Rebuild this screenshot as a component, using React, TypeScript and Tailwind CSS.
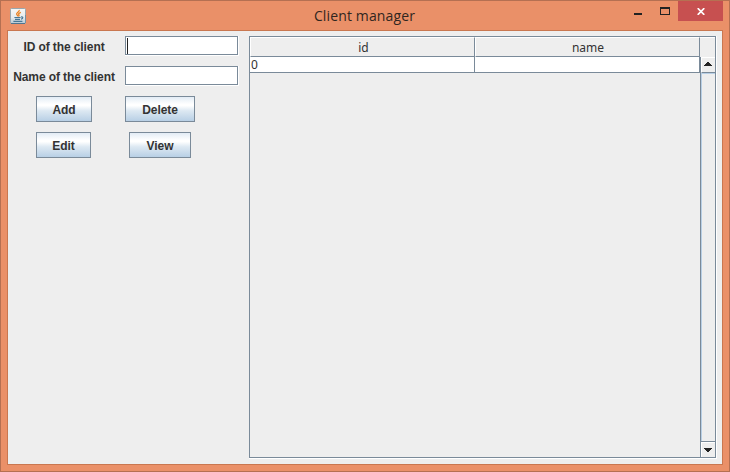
import React from "react";

function JavaIcon() {
  return (
    <svg width="16" height="16" viewBox="0 0 16 16" fill="none">
      <defs>
        <linearGradient id="tile" x1="0" y1="0" x2="0" y2="1">
          <stop offset="0" stopColor="#f7f7f5" />
          <stop offset="0.6" stopColor="#e6ebee" />
          <stop offset="1" stopColor="#b4c6d2" />
        </linearGradient>
      </defs>
      <rect x="0.5" y="0.5" width="15" height="15" rx="1" fill="url(#tile)" stroke="#98a7af" />
      <path d="M1 15.5H15" stroke="#4d7590" />
      <path d="M15.5 7V15" stroke="#7391a3" />
      <path d="M9.2 2C9.8 4 6 4.6 6.7 6.3C7 7.1 8 7.5 7.8 8.5M10.8 4.4C8.9 5.2 8.2 5.8 8.9 6.9C9.3 7.5 9 8 8.6 8.4" stroke="#ea7f1c" strokeWidth="1.3" />
      <path d="M4.4 9.5H10.6M5 11.4H10M11 9C13.6 8.5 13.2 10.8 11 11.2M3.4 13.3H12.4" stroke="#477795" strokeWidth="1.2" />
    </svg>
  );
}

function TextField({ caret = false }: { caret?: boolean }) {
  return (
    <div className="h-5 w-[114px] border-r border-b border-white">
      <div className="h-[19px] w-[113px] border border-[#7a8a99] bg-white pl-px pt-px">
        {caret && <div className="h-4 w-px bg-[#222]" />}
      </div>
    </div>
  );
}

function Button({ label, className }: { label: string; className: string }) {
  return (
    <button
      className={`flex h-[26px] items-center justify-center border border-[#7a8a99] bg-[linear-gradient(to_bottom,#e3ecf5_0%,#ffffff_30%,#ffffff_36%,#dce8f2_58%,#b8cfe5_100%)] pt-px text-[12px] leading-none font-bold tracking-[-0.05px] text-[#333] ${className}`}
    >
      {label}
    </button>
  );
}

function Arrow({ down = false }: { down?: boolean }) {
  return (
    <svg width="8" height="4" viewBox="0 0 8 4" shapeRendering="crispEdges" className={down ? "mr-[2px] rotate-180" : "mr-[2px] mb-[2px]"}>
      <path d="M3 0H5V1H6V2H7V3H8V4H0V3H1V2H2V1H3Z" fill="#222" />
    </svg>
  );
}

function TitleBar() {
  return (
    <header className="flex h-[29px] w-full">
      <div className="w-[213px] pt-[7px] pl-[9px]">
        <JavaIcon />
      </div>
      <h1 className="w-[301px] pt-[3px] text-center font-['Open_Sans','Noto_Sans',sans-serif] text-[14px] leading-6 tracking-[0.14px] text-[#302620]">
        Client manager
      </h1>
      <div className="flex flex-1 justify-end">
        <div className="mt-3 mr-[18px] h-[2px] w-2 bg-[#222]" />
        <div className="mt-[6px] mr-2 h-2 w-[10px] border border-t-2 border-[#222]" />
        <div className="mr-[6px] flex h-5 w-[45px] items-center justify-center bg-[#c75050]">
          <svg width="8" height="7" viewBox="0 0 8 7" className="mt-px">
            <path d="M0.7 0.2L7.3 6.8M7.3 0.2L0.7 6.8" stroke="white" strokeWidth="1.7" />
          </svg>
        </div>
      </div>
    </header>
  );
}

function ClientForm() {
  return (
    <section className="w-[241px] pt-[5px]">
      <div className="flex">
        <label className="w-[112px] pt-[5px] text-center text-[12px] leading-3 font-bold tracking-[-0.1px] whitespace-nowrap text-[#333]">
          ID of the client
        </label>
        <div className="ml-[5px]">
          <TextField caret />
        </div>
      </div>
      <div className="mt-[10px] flex">
        <label className="w-[112px] pt-[5px] text-center text-[12px] leading-3 font-bold tracking-[-0.1px] whitespace-nowrap text-[#333]">
          Name of the client
        </label>
        <div className="ml-[5px]">
          <TextField />
        </div>
      </div>
      <div className="mt-[10px] flex">
        <Button label="Add" className="ml-7 w-14" />
        <Button label="Delete" className="ml-[33px] w-[70px]" />
      </div>
      <div className="mt-[10px] flex">
        <Button label="Edit" className="ml-7 w-[55px]" />
        <Button label="View" className="ml-[38px] w-[62px]" />
      </div>
    </section>
  );
}

function ClientTable() {
  return (
    <section className="mt-[5px] h-[423px] w-[468px] border-r border-b border-white font-['Noto_Sans','Open_Sans',sans-serif] text-[12px] text-[#333]">
      <div className="flex h-[422px] w-[467px] border border-[#7a8a99]">
        <div className="flex w-[450px] flex-col">
          <div className="flex h-5 text-center leading-[19px]">
            <div className="w-[225px] border border-t-white border-r-[#7a8a99] border-b-[#7a8a99] border-l-white pl-[2px]">id</div>
            <div className="w-[225px] border border-t-white border-r-[#7a8a99] border-b-[#7a8a99] border-l-white pl-px">name</div>
          </div>
          <div className="flex h-4 bg-white leading-[15px]">
            <div className="w-[225px] border-r border-b border-[#7a8a99] pl-px">0</div>
            <div className="w-[225px] border-r border-b border-[#7a8a99]" />
          </div>
        </div>
        <div className="flex w-[15px] flex-col">
          <div className="h-5 border-t border-white" />
          <div className="flex flex-1 flex-col border-l border-[#7a8a99]">
            <div className="flex h-4 items-center justify-center border border-r-0 border-t-white border-l-white border-b-[#7a8a99]">
              <Arrow />
            </div>
            <div className="flex-1 border-t border-l border-[#b8cfe5]" />
            <div className="flex h-4 items-center justify-center border-t border-[#7a8a99]">
              <div className="flex h-full w-full items-center justify-center border-t border-l border-white">
                <Arrow down />
              </div>
            </div>
          </div>
        </div>
      </div>
    </section>
  );
}

export default function App() {
  return (
    <div className="h-[472px] w-[730px] overflow-hidden border border-[#b57052] bg-[#ea9068] font-['Liberation_Sans',Arial,sans-serif]">
      <TitleBar />
      <main className="ml-[6px] flex h-[435px] w-[716px] border border-[#c97750] bg-[#eeeeee]">
        <ClientForm />
        <ClientTable />
      </main>
    </div>
  );
}
